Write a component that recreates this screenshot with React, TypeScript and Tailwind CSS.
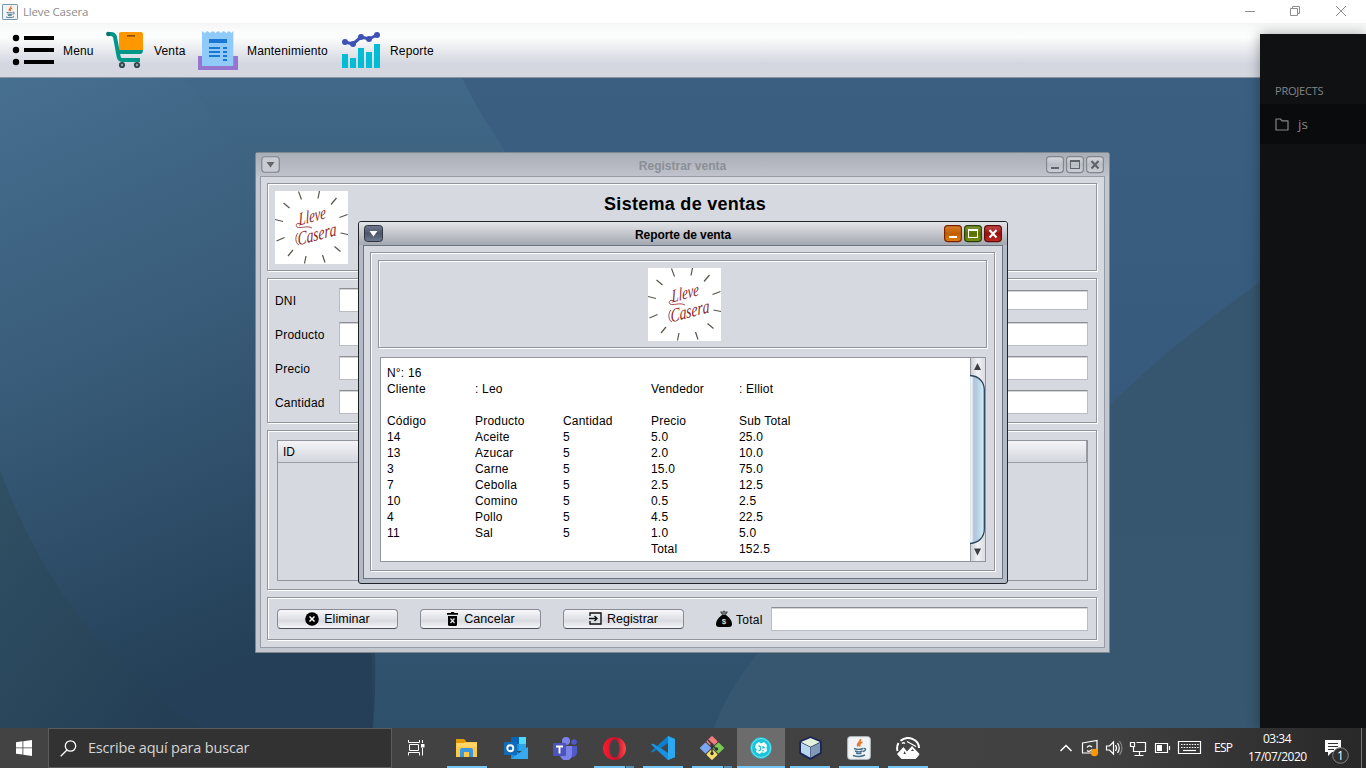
import React from "react";

const ETCH =
  "border border-[#92959e] shadow-[1px_1px_0_#fff,inset_1px_1px_0_#fff]";
const FIELD =
  "border border-[#b9bcc3] border-t-[#8c8e94] bg-white shadow-[inset_0_1px_0_#d3d4d8]";

const RAYS = [
  [23.5, 0.5, 26.5, 8.5], [44.5, 0, 43, 7.5], [61.5, 7, 56, 13.5], [72.5, 23.5, 64.5, 26.5],
  [73, 43.5, 65.5, 42], [65.5, 60.5, 59.5, 55.5], [50, 71.5, 47.5, 64], [29.5, 72.5, 31, 65],
  [13, 65, 18, 59], [1.5, 50, 9.5, 46.5], [0, 28.5, 8, 30.5], [8.5, 12, 14.5, 17],
];

function Logo() {
  return (
    <svg width="73" height="73" viewBox="0 0 73 73" className="block shrink-0 bg-white">
      {RAYS.map((r, i) => (
        <line key={i} x1={r[0]} y1={r[1]} x2={r[2]} y2={r[3]} stroke="#55554a" strokeWidth="1.2" />
      ))}
      <g fill="#8c1f25" fontFamily="'Liberation Serif', serif" fontStyle="italic">
        <text transform="translate(24,34.500) rotate(-15) skewX(-12)" fontSize="18" textLength="28" lengthAdjust="spacingAndGlyphs">Lleve</text>
        <text transform="translate(23,54.500) rotate(-15) skewX(-12)" fontSize="19" textLength="40" lengthAdjust="spacingAndGlyphs">Casera</text>
      </g>
      <path d="M26 33c-4-2-6 1-4 3 3 2 10-2 15 1M23 42c-3 3-3 10 1 12" fill="none" stroke="#8c1f25" strokeWidth=".8" />
    </svg>
  );
}

function Wallpaper() {
  return (
    <svg width="1366" height="650" viewBox="0 78 1366 650" className="absolute inset-0">
      <defs>
        <linearGradient id="wa" x1="0" y1="0" x2="0.25" y2="1">
          <stop offset="0" stopColor="#476f90" /><stop offset=".5" stopColor="#375a77" /><stop offset="1" stopColor="#243f57" />
        </linearGradient>
        <linearGradient id="wb" x1="0" y1="0" x2="0" y2="1">
          <stop offset="0" stopColor="#416888" /><stop offset=".5" stopColor="#34566f" /><stop offset="1" stopColor="#264158" />
        </linearGradient>
        <linearGradient id="wc" x1="0" y1="0" x2="0" y2="1">
          <stop offset="0" stopColor="#3a5f81" /><stop offset=".6" stopColor="#36597a" /><stop offset="1" stopColor="#2f506a" />
        </linearGradient>
        <linearGradient id="wd" x1="0" y1="0" x2="1" y2="1">
          <stop offset="0" stopColor="#305064" /><stop offset="1" stopColor="#233d53" />
        </linearGradient>
        <linearGradient id="we" x1="0" y1="0" x2="0" y2="1">
          <stop offset="0" stopColor="#36566f" /><stop offset="1" stopColor="#36576f" />
        </linearGradient>
      </defs>
      <rect y="78" width="1366" height="650" fill="url(#wb)" />
      <path d="M0 78H185C215 118 240 160 262 215C320 350 376 520 373 728H0Z" fill="url(#wa)" />
      <path d="M462 78H1366V728H373C376 690 376 660 374 640L350 400L505 152C490 128 475 105 462 78Z" fill="url(#wc)" />
      <path d="M0 470C45 590 110 670 200 728H0Z" fill="url(#wd)" />
      <path d="M1260 282C1200 325 1155 360 1105 410C930 520 760 600 714 728H1260Z" fill="url(#we)" />
    </svg>
  );
}

function Java({ size }: { size: number }) {
  return (
    <svg width={size} height={size} viewBox="0 0 24 24" className="block shrink-0">
      <rect x=".7" y=".7" width="22.6" height="22.6" rx={size > 20 ? 2.5 : 1} fill="#f1f3f4" stroke={size > 20 ? "#b7c3cc" : "#6f93ad"} strokeWidth={size > 20 ? 1 : 1.5} />
      <path d="M13.5 3c1 3-4.5 4-2.500 7.500M15.500 6c-3 1-3.500 2.500-2.500 4.500" fill="none" stroke="#e8762c" strokeWidth="1.800" />
      <path d="M7 12.500c3 1 7 1 9 0M8 15c2.500 1 5.500 1 7.500 0M9 17.200c2 .6 4 .6 5.500 0M16.500 12.500c3-.5 2.500 2.500-.5 3M6 19.500c4 1.500 9 1 12-.5" fill="none" stroke="#46728f" strokeWidth="1.400" />
    </svg>
  );
}

function MenuIcon() {
  return (
    <svg width="44" height="40" viewBox="12 30 44 40" className="shrink-0">
      {[38, 50, 62].map((y) => (
        <g key={y}><circle cx="16" cy={y} r="3.200" /><rect x="24" y={y - 2} width="30" height="4" /></g>
      ))}
    </svg>
  );
}
function CartIcon() {
  return (
    <svg width="44" height="40" viewBox="104 30 44 40" className="shrink-0">
      <rect x="119" y="32" width="24" height="20" rx="2" fill="#ff9800" />
      <rect x="127" y="35" width="8" height="1.600" fill="#8a4b00" />
      <path d="M108 34H111Q114 34 115 37L118.500 56Q119.200 60 122 60H140" fill="none" stroke="#009688" strokeWidth="4" />
      <circle cx="108.300" cy="34" r="2.200" fill="#00796b" />
      <path d="M117 50H143Q143 54 140 54H118Z" fill="#009688" />
      <circle cx="122" cy="65" r="3.100" fill="#37474f" /><circle cx="137" cy="65" r="3.100" fill="#37474f" />
      <circle cx="122" cy="65" r="1.200" fill="#90a4ae" /><circle cx="137" cy="65" r="1.200" fill="#90a4ae" />
    </svg>
  );
}
function ReceiptIcon() {
  return (
    <svg width="42" height="42" viewBox="197 29 42 42" className="shrink-0">
      <path d="M198 56H238V70H198Z" fill="#9575cd" />
      <path d="M202 66V31l2.700 2 2.700-2 2.700 2 2.700-2 2.700 2 2.700-2 2.700 2 2.700-2 2.700 2 2.700-2 2.300 2 2-2V66Z" fill="#90caf9" />
      <path d="M209 39h18v4h-18zM209 47h11v2h-11zM209 51h11v2h-11zM209 55h11v2h-11zM223 47h4v2h-4zM223 51h4v2h-4zM223 55h4v2h-4zM223 59h4v2h-4z" fill="#1976d2" />
    </svg>
  );
}
function ChartIcon() {
  return (
    <svg width="42" height="40" viewBox="340 30 42 40" className="shrink-0">
      <path d="M342 54h6v14h-6zM350 58h6v10h-6zM358 48h6v20h-6zM366 52h6v16h-6zM374 44h6v24h-6z" fill="#00bcd4" />
      <path d="M345 42L353 44L361 37L369 39L377 35" fill="none" stroke="#3f51b5" strokeWidth="3" />
      {[[345, 42], [353, 44], [361, 37], [369, 39], [377, 35]].map(([x, y]) => (
        <circle key={x} cx={x} cy={y} r="3" fill="#3f51b5" />
      ))}
    </svg>
  );
}

function MenuGlyph({ active }: { active?: boolean }) {
  return active ? (
    <svg width="19" height="18" viewBox="0 0 19 18">
      <defs><linearGradient id="mg" x1="0" y1="0" x2="0" y2="1"><stop offset="0" stopColor="#717a8e" /><stop offset=".5" stopColor="#4d566a" /><stop offset="1" stopColor="#6f7a90" /></linearGradient></defs>
      <rect x=".5" y=".5" width="18" height="16" rx="3" fill="url(#mg)" stroke="#30343f" />
      <path d="M5.500 6h8L9.500 11.500z" fill="#fff" />
    </svg>
  ) : (
    <svg width="19" height="18" viewBox="0 0 19 18">
      <rect x=".75" y=".75" width="17.500" height="15.500" rx="3" fill="#c9ccd3" stroke="#80848c" strokeWidth="1.200" />
      <path d="M5.500 6h8L9.500 11.500z" fill="#63666d" />
    </svg>
  );
}

const BTN = { orange: ["#d98030", "#c05e00", "#e07c10", "#7a2000"], green: ["#7f9a3a", "#577000", "#789018", "#2b3d08"], red: ["#c4504c", "#97100c", "#c02a24", "#600a08"], gray: ["#d6d8dc", "#b9bdc5", "#cdd0d6", "#80848c"] };
function WinButton({ tone, kind }: { tone: keyof typeof BTN; kind: "min" | "max" | "close" }) {
  const c = BTN[tone];
  const fg = tone === "gray" ? "#5f636b" : "#fff";
  const id = "g" + tone + kind;
  return (
    <svg width="18" height="18" viewBox="0 0 18 18">
      <defs><linearGradient id={id} x1="0" y1="0" x2="0" y2="1"><stop offset="0" stopColor={c[0]} /><stop offset=".5" stopColor={c[1]} /><stop offset="1" stopColor={c[2]} /></linearGradient></defs>
      <rect x=".6" y=".6" width="16.800" height="16" rx="3" fill={"url(#" + id + ")"} stroke={c[3]} strokeWidth="1.100" />
      {kind === "min" && <rect x="5" y="11" width="8" height="2" fill={fg} />}
      {kind === "max" && <path d="M4 4h10v9H4zM5 6v6h8V6z" fill={fg} fillRule="evenodd" />}
      {kind === "close" && <path d="M5.500 5L12.500 12.500M12.500 5L5.500 12.500" stroke={fg} strokeWidth="2.100" />}
    </svg>
  );
}

function SwingButton({ label, children }: { label: string; children: React.ReactNode }) {
  return (
    <button className="flex h-5 w-[121px] items-center justify-center gap-[5px] rounded-[4px] border border-[#898c94] border-b-[#4d5057] bg-linear-to-b from-[#f9f9fb] via-[#d9dbe2] via-60% to-[#f5f6f9] text-[12.5px] tracking-[0.05px]">
      {children}<span className="pt-px">{label}</span>
    </button>
  );
}

function SalesWindow() {
  const rows = ["DNI", "Producto", "Precio", "Cantidad"];
  return (
    <section className="absolute left-[255px] top-[74px] flex h-[501px] w-[855px] flex-col rounded-t-[3px] border border-[#7f8791] bg-[#c3c7cf] px-1 pb-1">
      <header className="-mx-1 flex h-[23px] items-center justify-between bg-linear-to-b from-[#a9adb6] to-[#c0c3cb] px-[5px] text-[12px] font-bold text-[#8b8f97]">
        <div className="w-[58px]"><MenuGlyph /></div>
        <span className="pt-[2px] tracking-[0px]">Registrar venta</span>
        <div className="flex w-[58px] gap-[2px]">
          <WinButton tone="gray" kind="min" /><WinButton tone="gray" kind="max" /><WinButton tone="gray" kind="close" />
        </div>
      </header>
      <div className="flex flex-1 flex-col border border-[#969ba6] bg-[#d6d9e0] px-[6px] pt-[6px]">
        <div className={`flex h-[88px] w-[830px] shrink-0 p-[7px] ${ETCH}`}>
          <Logo />
          <h1 className="-ml-[67px] flex-1 pt-px text-center text-[18px] font-bold leading-6 tracking-[0.28px]">Sistema de ventas</h1>
        </div>
        <div className={`mt-[7px] flex h-[145px] w-[830px] shrink-0 flex-col gap-[10px] py-[9px] pl-[7px] pr-[8px] ${ETCH}`}>
          {rows.map((r, i) => (
            <div key={r} className="flex h-6 items-center">
              <label className="w-16 pt-[2px] tracking-[0.2px]">{r}</label>
              <div className={`h-6 w-[320px] ${FIELD}`} />
              <div className={`ml-auto w-[320px] ${i === 0 ? "h-5" : "h-6"} ${FIELD}`} />
            </div>
          ))}
        </div>
        <div className={`mt-[7px] h-[160px] w-[830px] shrink-0 p-[9px] pr-[8px] ${ETCH}`}>
          <div className="h-[141px] border border-[#92959e]">
            <div className="flex h-[22px] items-center border-b border-r border-[#9a9da5] bg-linear-to-b from-[#f5f5f8] to-[#d3d6de] pl-[5px] text-[12px]">ID</div>
          </div>
        </div>
        <div className={`mt-[7px] flex h-[43px] w-[830px] shrink-0 items-center gap-[22px] pl-[9px] pr-[8px] ${ETCH}`}>
          <SwingButton label="Eliminar">
            <svg width="14" height="14" viewBox="0 0 14 14"><circle cx="7" cy="7" r="6.800" /><path d="M4.500 4.500l5 5M9.500 4.500l-5 5" stroke="#fff" strokeWidth="1.500" /></svg>
          </SwingButton>
          <SwingButton label="Cancelar">
            <svg width="13" height="14" viewBox="0 0 13 14"><path d="M1 1h3.500l1-1h2l1 1H12v1.800H1zM2 4h9v8.500q0 1.500-1.500 1.500h-6Q2 14 2 12.500z" /><path d="M4.500 6.500l4 4.500M8.500 6.500l-4 4.500" stroke="#e5e7ec" strokeWidth="1.300" /></svg>
          </SwingButton>
          <SwingButton label="Registrar">
            <svg width="13" height="13" viewBox="0 0 13 13" fill="none" stroke="#111" strokeWidth="1.400"><path d="M1 4V1h11v11H1V9M0 6.500h8M5.500 4l2.500 2.500L5.500 9" /></svg>
          </SwingButton>
          <div className="ml-[10px] flex flex-1 items-center">
            <svg width="16" height="17" viewBox="0 0 16 17"><path d="M6 5h4c4 3 6 6 6 9 0 2-1 3-3 3H3c-2 0-3-1-3-3 0-3 2-6 6-9z" /><path d="M6 4.300L4.700 1.800 6.700 2.200 8 .8 9.300 2.200 11.300 1.800 10 4.300z" fill="#777" stroke="#222" strokeWidth=".7" /><text x="8" y="14" textAnchor="middle" fontSize="8" fontWeight="700" fill="#ddd">$</text></svg>
            <span className="ml-1 w-[35px] pt-[2px] tracking-[0.25px]">Total</span>
            <div className={`h-6 flex-1 ${FIELD}`} />
          </div>
        </div>
      </div>
    </section>
  );
}

const REPORT = [
  ["N°: 16"], ["Cliente", ": Leo", "", "Vendedor", ": Elliot"], [],
  ["Código", "Producto", "Cantidad", "Precio", "Sub Total"],
  ["14", "Aceite", "5", "5.0", "25.0"], ["13", "Azucar", "5", "2.0", "10.0"], ["3", "Carne", "5", "15.0", "75.0"],
  ["7", "Cebolla", "5", "2.5", "12.5"], ["10", "Comino", "5", "0.5", "2.5"], ["4", "Pollo", "5", "4.5", "22.5"],
  ["11", "Sal", "5", "1.0", "5.0"], ["", "", "", "Total", "152.5"],
];

function ReportWindow() {
  return (
    <section className="absolute left-[358px] top-[143px] flex h-[363px] w-[650px] flex-col rounded-[3px] border border-[#202328] bg-[#b3bac6] px-1 pb-1">
      <header className="-mx-1 flex h-[23px] items-center justify-between rounded-t-[2px] bg-linear-to-b from-[#e3e5e8] via-[#c3c6cc] via-50% to-[#a3a8b1] px-[5px] text-[12px] font-bold">
        <div className="w-[58px]"><MenuGlyph active /></div>
        <span className="pt-[2px] tracking-[-0.08px]">Reporte de venta</span>
        <div className="flex w-[58px] gap-[2px]">
          <WinButton tone="orange" kind="min" /><WinButton tone="green" kind="max" /><WinButton tone="red" kind="close" />
        </div>
      </header>
      <div className="flex-1 border border-[#687482] bg-[#d6d9e0] px-[6px] pt-[6px]">
        <div className={`h-[319px] w-[625px] p-[7px] ${ETCH}`}>
          <div className={`flex h-[88px] w-[609px] items-center justify-center pl-[4px] ${ETCH}`}><Logo /></div>
          <div className="ml-[2px] mt-[9px] flex h-[205px] w-[606px] border border-[#92959e] bg-white">
            <div className="flex flex-1 flex-col pl-[6px] pt-[7px]">
              {REPORT.map((row, i) => (
                <div key={i} className="grid h-4 grid-cols-[repeat(5,88px)] leading-4 tracking-[0.2px]">
                  {row.map((c, j) => <span key={j} className="whitespace-nowrap">{c}</span>)}
                </div>
              ))}
            </div>
            <svg width="15" height="203" viewBox="0 0 15 203" className="shrink-0">
              <defs>
                <linearGradient id="sb"><stop offset="0" stopColor="#d5dfe9" /><stop offset=".12" stopColor="#f4f7fb" /><stop offset=".25" stopColor="#b5c6db" /><stop offset=".45" stopColor="#b3cbe0" /><stop offset="1" stopColor="#d5f0fa" /></linearGradient>
                <linearGradient id="sa"><stop offset="0" stopColor="#c9ccd2" /><stop offset=".5" stopColor="#f2f3f5" /><stop offset="1" stopColor="#dadce1" /></linearGradient>
              </defs>
              <rect width="15" height="203" fill="url(#sa)" />
              <path d="M.5 0V203" stroke="#92959e" />
              <path d="M0 17.500C9 18 14.300 24 14.300 32V171C14.300 179 9 185 0 185.500Z" fill="url(#sb)" />
              <path d="M0 17.500C9 18 14.300 24 14.300 32V171C14.300 179 9 185 0 185.500" fill="none" stroke="#2c455c" strokeWidth="1.300" />
              <path d="M4 12h7L7.500 5zM4 190.500h7L7.500 197.500z" fill="#3b3e44" />
            </svg>
          </div>
        </div>
      </div>
    </section>
  );
}

function TaskSlot({ children, line = "full" }: { children: React.ReactNode; line?: "none" | "full" | "split" | "active" }) {
  return (
    <div className={`flex h-10 w-12 flex-col items-center ${line === "active" ? "bg-[#6c6c6c]" : ""}`}>
      <div className="flex h-[38px] items-center pt-[2px]">{children}</div>
      {line === "full" && <div className="h-[2px] w-10 bg-[#76c7f5]" />}
      {line === "active" && <div className="h-[2px] w-12 bg-[#76c7f5]" />}
      {line === "split" && <div className="flex h-[2px] w-10 gap-px"><div className="w-[31px] bg-[#76c7f5]" /><div className="w-2 bg-[#5590b0]" /></div>}
    </div>
  );
}

function Taskbar() {
  return (
    <footer className="relative flex h-10 w-full bg-linear-to-r from-[#434343] via-[#414141] via-80% to-[#282828] font-['Open_Sans',sans-serif] text-white">
      <div className="flex w-12 items-center justify-center">
        <svg width="16" height="16" viewBox="0 0 16 16" fill="#fff"><path d="M0 2.200L6.500 1.300V7.500H0zM7.300 1.200L16 0V7.500H7.300zM0 8.300H6.500V14.600L0 13.700zM7.300 8.300H16V16L7.300 14.800z" /></svg>
      </div>
      <div className="flex w-[344px] items-center border border-[#5c5c5c] bg-[#323232] pl-[11px]">
        <svg width="17" height="17" viewBox="0 0 17 17" fill="none" stroke="#fff" strokeWidth="1.300"><circle cx="10.500" cy="6" r="5.200" /><path d="M7 10L.7 16.300" /></svg>
        <span className="ml-[11px] whitespace-nowrap text-[14.5px] tracking-[-0.19px] text-[#d5d5d5]">Escribe aquí para buscar</span>
      </div>
      <div className="flex w-[51px] items-center pl-4">
        <svg width="17" height="16" viewBox="0 0 17 16" fill="none" stroke="#fff" strokeWidth="1"><path d="M.5 0V2.500H11.500V0M.5 15.500V12.500H11.500V15.500M1.500 4.500H10.500V10.500H1.500zM14.500 0V3M14.500 8V15.500" /><rect x="13.500" y="4.500" width="2.500" height="2.500" fill="#fff" /></svg>
      </div>
      <div className="flex gap-px">
        <TaskSlot><svg width="22" height="20" viewBox="0 0 22 20"><path d="M0 2h8l2 2h11v15H0z" fill="#fbc94b" /><path d="M0 1h8l2 2-2 2H0z" fill="#e19a00" /><path d="M1 5h20v4H1z" fill="#ffd566" /><path d="M4 19v-7q0-2 2-2h9q2 0 2 2v7h-4v-5H8v5z" fill="#3a96dd" /></svg></TaskSlot>
        <TaskSlot line="none"><svg width="24" height="22" viewBox="0 0 24 22"><rect x="7" width="15" height="14" rx="1" fill="#1490df" /><path d="M15 0h7v7h-7z" fill="#50d9ff" /><path d="M15 7h7v7h-7z" fill="#28a8ea" /><path d="M7 0h8v7H7z" fill="#0364b8" /><path d="M7 11l8 5 9-6v12H7z" fill="#1b8fdd" /><path d="M7 22L24 10v12z" fill="#35aaf0" /><rect y="5" width="13" height="13" rx="1" fill="#0f6cbd" /><circle cx="6.300" cy="11.300" r="3" fill="none" stroke="#fff" strokeWidth="1.900" /></svg></TaskSlot>
        <TaskSlot line="none"><svg width="24" height="23" viewBox="0 0 24 23"><circle cx="13" cy="4" r="4" fill="#7b83eb" /><circle cx="21" cy="5" r="2.800" fill="#5059c9" /><path d="M15 9h9v7a5 5 0 0 1-6 4z" fill="#5059c9" /><path d="M7 9h12v8a6 6 0 0 1-12 1z" fill="#7b83eb" /><rect y="6" width="13" height="13" rx="1" fill="#4b53bc" /><path d="M3 9.500h7M6.500 9.500v7" stroke="#fff" strokeWidth="1.900" /></svg></TaskSlot>
        <TaskSlot line="split"><svg width="23" height="23" viewBox="0 0 23 23"><defs><linearGradient id="op"><stop offset="0" stopColor="#ff1b2d" /><stop offset=".6" stopColor="#c8102c" /><stop offset="1" stopColor="#ff4b4b" /></linearGradient></defs><path d="M11.500 0a11.500 11.500 0 1 0 .01 0zM11.500 2.500c3 0 5 4 5 9s-2 9-5 9-5-4-5-9 2-9 5-9z" fillRule="evenodd" fill="url(#op)" /></svg></TaskSlot>
        <TaskSlot><svg width="24" height="24" viewBox="0 0 24 24"><path d="M17 0l7 3v18l-7 3L5.500 13.500 2 16.500 0 15.500 17 0z" fill="#0d7fd0" /><path d="M0 8.500l2-1L24 21l-7 3z" fill="#1b91e0" /><path d="M17 0l7 3v18l-7 3z" fill="#2aa8f2" /><path d="M17 7v10l-7-5z" fill="#444" /></svg></TaskSlot>
        <TaskSlot line="split"><svg width="24" height="24" viewBox="0 0 24 24"><g transform="rotate(45 12 12)"><rect x="3.300" y="3.300" width="8.200" height="8.200" rx="1" fill="#f47c7c" /><rect x="12.500" y="3.300" width="8.200" height="8.200" rx="1" fill="#7ec855" /><rect x="3.300" y="12.500" width="8.200" height="8.200" rx="1" fill="#7ba7f5" /><rect x="12.500" y="12.500" width="8.200" height="8.200" rx="1" fill="#f9de6d" /></g><path d="M8 4l4 4v9M12 9l4 4" stroke="#333" strokeWidth="1.400" fill="none" /><circle cx="12" cy="9" r="1.700" fill="#333" /><circle cx="16.500" cy="13" r="1.700" fill="#333" /><circle cx="12" cy="17.500" r="1.700" fill="#333" /></svg></TaskSlot>
        <TaskSlot line="active"><svg width="22" height="22" viewBox="0 0 22 22"><circle cx="11" cy="11" r="10.700" fill="#1cc4d9" /><circle cx="11" cy="11" r="9.500" fill="none" stroke="#8ae7f1" strokeWidth=".8" /><path d="M6 7l3-2 2 1.500L14 5l3 3-.5 3 .5 3-3 2-2-.7L9.500 17 6 15l.7-2.500L5 10z" fill="#effcff" /><path d="M8.500 8.500l2 1.500v3l-2 1M13 9v2l2-.5M13 13v1.500" fill="none" stroke="#21bccf" strokeWidth="1.200" /></svg></TaskSlot>
        <TaskSlot><svg width="23" height="24" viewBox="0 0 23 24"><path d="M11.500 1L22 5.500V17L11.500 23 1 17V5.500z" fill="#1b2555" stroke="#1b2555" strokeWidth="1.500" strokeLinejoin="round" /><path d="M11.500 2L21 6l-9.500 4.700L2 6z" fill="#e2f0dc" /><path d="M2 6.800L11.300 11.300v10.500L2 16.500z" fill="#b9d6ec" /><path d="M21 6.800L11.700 11.300v10.500L21 16.500z" fill="#8199b8" /></svg></TaskSlot>
        <TaskSlot><Java size={24} /></TaskSlot>
        <TaskSlot><svg width="24" height="22" viewBox="0 0 24 22"><path d="M4.500 3.800A11 10 0 0 1 23 11M2.500 6A10.500 10.500 0 0 0 1.500 14" fill="none" stroke="#fff" strokeWidth="2" /><path d="M1 17L7.500 10l3.500 4.500L16 9l7.500 8a12 12 0 0 1-19 4z" fill="#fff" /><path d="M7.500 17l1-3 1.500 3zM15 14l1.500-2 1.500 2z" fill="#444" /><path d="M6 6.500q1.500-1.500 3 0M11 4.500l9 5" stroke="#fff" strokeWidth="1.300" fill="none" /></svg></TaskSlot>
      </div>
      <div className="ml-auto flex items-center">
        <svg width="144" height="24" viewBox="1060 736 144 24" className="shrink-0" fill="none" stroke="#fff" strokeWidth="1.200">
          <path d="M1061.500 751L1067 745.500L1072.500 751" strokeWidth="1.500" />
          <path d="M1083.500 743L1098 740.500V753H1083.500zM1088 747.500q2-3 5-.5M1088 750.500q2 2 5-1" />
          <circle cx="1095.500" cy="752.500" r="3.700" fill="#ff9800" stroke="none" />
          <path d="M1107.500 746h3l4-4v12l-4-4h-3zM1116.500 745q2 3 0 6M1118.500 743q3.500 5 0 10" /><path d="M1120.500 741q5 7 0 14" stroke="#888" />
          <path d="M1137.500 742.500H1146.500V751.500H1134.500V747M1140.500 752V755M1135.500 755.500H1144.500M1131.500 742.500H1135.500V746.500H1131.500z" />
          <path d="M1156.500 743.500H1168.500V752.500H1156.500zM1170.500 746V750" /><path d="M1158 745h5v6h-5z" fill="#fff" stroke="none" />
          <path d="M1179.500 741.500H1201.500V753.500H1179.500z" /><path d="M1182 744.500H1200M1182 747.500H1200" strokeDasharray="1.500 1.200" /><path d="M1184 750.500H1197" />
        </svg>
        <span className="ml-[11px] w-[34px] text-[12px] tracking-[-0.7px]">ESP</span>
        <div className="flex w-[58px] flex-col whitespace-nowrap text-center text-[12px] leading-[18px] tracking-[-0.5px]"><span>03:34</span><span>17/07/2020</span></div>
        <svg width="60" height="40" viewBox="1306 728 60 40">
          <path d="M1325 740h16v12h-9l-4 4v-4h-3z" fill="#fff" /><path d="M1328 743.500h10M1328 746.500h10M1328 749.500h6" stroke="#333" />
          <circle cx="1340.500" cy="755.500" r="7.800" fill="#303030" stroke="#858585" />
          <text x="1340.500" y="760" textAnchor="middle" fontSize="12" fill="#fff">1</text>
          <path d="M1361.500 728V768" stroke="#777" />
        </svg>
      </div>
    </footer>
  );
}

export default function App() {
  const tools = [
    { label: "Menu", icon: <MenuIcon />, cls: "w-[92px] pl-3 gap-[7px]" },
    { label: "Venta", icon: <CartIcon />, cls: "w-[105px] pl-3 gap-[6px]" },
    { label: "Mantenimiento", icon: <ReceiptIcon />, cls: "w-[143px] gap-2" },
    { label: "Reporte", icon: <ChartIcon />, cls: "w-[110px] gap-2" },
  ];
  return (
    <main className="relative flex h-[768px] w-[1366px] flex-col overflow-hidden bg-white font-['Liberation_Sans',Arial,sans-serif] text-[12px] text-black">
      <div className="flex h-[23px] shrink-0 items-center bg-white pl-[2px] font-['Open_Sans',sans-serif] text-[11.5px] text-[#8c8c8c]">
        <Java size={16} />
        <span className="ml-[5px] tracking-[-0.17px]">Lleve Casera</span>
        <svg width="104" height="14" viewBox="1244 4 104 14" className="ml-auto mr-[18px]" fill="none" stroke="#8e8e8e">
          <path d="M1245 10.500h10M1290.500 7.500h7v7h-7zM1292.500 7V5.500h7v7H1298M1336 5l10 10M1346 5l-10 10" />
        </svg>
      </div>
      <nav className="flex h-[55px] shrink-0 items-center border-b border-[#8d939d] bg-linear-to-b from-[#f5f6f6] via-[#fdfefd] via-25% to-[#d4d7e0] to-75%">
        {tools.map((t) => (
          <div key={t.label} className={`flex shrink-0 items-center tracking-[0.17px] ${t.cls}`}>
            {t.icon}<span className="pt-[2px]">{t.label}</span>
          </div>
        ))}
      </nav>
      <div className="relative h-[650px] shrink-0">
        <Wallpaper />
        <SalesWindow />
        <ReportWindow />
      </div>
      <aside className="absolute left-[1260px] top-[34px] flex h-[694px] w-[106px] flex-col bg-[#101113] font-['Open_Sans',sans-serif] text-[#858585] shadow-[0_0_12px_rgba(0,0,0,0.35)]">
        <h2 className="h-[70px] pl-[15px] pt-[49px] text-[11px] leading-4 tracking-[-0.2px]">PROJECTS</h2>
        <div className="flex h-10 items-center gap-[9px] bg-[#0a0b0d] pl-[15px] text-[13.5px]">
          <svg width="14" height="13" viewBox="0 0 14 13" fill="none" stroke="#858585" strokeWidth="1.200"><path d="M1 1H5.500L7 2.800H13V12H1z" strokeLinejoin="round" /></svg>
          <span>js</span>
        </div>
      </aside>
      <Taskbar />
    </main>
  );
}
